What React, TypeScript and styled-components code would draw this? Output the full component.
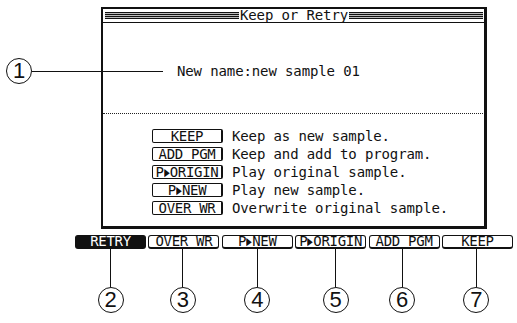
import styled, { createGlobalStyle } from 'styled-components';

const GlobalStyle = createGlobalStyle`
  html, body {
    margin: 0;
    padding: 0;
    background: #fff;
  }
  body {
    font-family: 'DejaVu Sans Mono', 'Liberation Mono', monospace;
    color: #111;
  }
`;

// narrow play triangle used in the P▶NEW / P▶ORIGIN labels
const Arrow = styled.span`
  display: inline-block;
  font-family: 'DejaVu Sans', sans-serif;
  font-size: 13px;
  letter-spacing: 0;
  transform: scale(0.55, 0.85);
  margin: 0 -2px;
`;

const playLabel = (rest: string) => (
  <>
    P<Arrow>{'\u25B6'}</Arrow>
    {rest}
  </>
);

const options = [
  { id: 'keep', key: <>KEEP</>, text: 'Keep as new sample.' },
  { id: 'add', key: <>ADD PGM</>, text: 'Keep and add to program.' },
  { id: 'orig', key: playLabel('ORIGIN'), text: 'Play original sample.' },
  { id: 'new', key: playLabel('NEW'), text: 'Play new sample.' },
  { id: 'over', key: <>OVER WR</>, text: 'Overwrite original sample.' },
];

const functionKeys = [
  { label: <>RETRY</>, num: '2', shift: 0, active: true },
  { label: <>OVER WR</>, num: '3', shift: -1 },
  { label: playLabel('NEW'), num: '4', shift: 0 },
  { label: playLabel('ORIGIN'), num: '5', shift: 5 },
  { label: <>ADD PGM</>, num: '6', shift: -2 },
  { label: <>KEEP</>, num: '7', shift: -1 },
];

const App = () => {
  return (
    <Page>
      <GlobalStyle />
      <Screen>
        <TitleBar>
          <Stripes />
          <Title>Keep or Retry</Title>
          <Stripes />
        </TitleBar>
        <NameArea>New name:new sample 01</NameArea>
        <DottedRule />
        <OptionList>
          {options.map((o) => (
            <OptionRow key={o.id}>
              <KeyBox>{o.key}</KeyBox>
              <OptionText>{o.text}</OptionText>
            </OptionRow>
          ))}
        </OptionList>
      </Screen>

      <FunctionBar>
        {functionKeys.map((f) => (
          <FnColumn key={f.num}>
            <FnButton $active={f.active}>{f.label}</FnButton>
            <Leader $shift={f.shift} />
            <Circle $shift={f.shift}>{f.num}</Circle>
          </FnColumn>
        ))}
      </FunctionBar>

      <NameCallout>
        <Circle>1</Circle>
        <CalloutLine />
      </NameCallout>
    </Page>
  );
};

const Page = styled.div`
  position: relative;
  width: 517px;
  height: 323px;
  overflow: hidden;
  background: #fff;
  display: flex;
  flex-direction: column;
`;

const Screen = styled.div`
  margin: 7px 0 0 101px;
  width: 386px;
  height: 222px;
  box-sizing: border-box;
  border: 2px solid #111;
  border-right-width: 3px;
  border-bottom-width: 3px;
  display: flex;
  flex-direction: column;
`;

const TitleBar = styled.div`
  height: 14px;
  box-sizing: border-box;
  border-bottom: 1px solid #111;
  display: flex;
  align-items: center;
  padding: 0 1px 0 2px;
`;

const Stripes = styled.div`
  flex: 1;
  height: 7px;
  background: repeating-linear-gradient(
    to bottom,
    #111 0,
    #111 1px,
    #bbb 1px,
    #bbb 2px
  );
`;

const Title = styled.div`
  font-size: 14px;
  letter-spacing: -0.12px;
  line-height: 13px;
  padding: 0 1px;
`;

const NameArea = styled.div`
  height: 90px;
  box-sizing: border-box;
  padding: 40px 0 0 74px;
  font-size: 14px;
  letter-spacing: -0.12px;
  line-height: 16px;
`;

const DottedRule = styled.div`
  border-top: 1px dotted #222;
  margin-right: 1px;
`;

const OptionList = styled.div`
  display: flex;
  flex-direction: column;
  gap: 4px;
  padding: 15px 0 0 49px;
`;

const OptionRow = styled.div`
  display: flex;
  align-items: center;
  gap: 9px;
  height: 14px;
`;

const KeyBox = styled.div`
  width: 71px;
  height: 14px;
  box-sizing: border-box;
  border: 1px solid #111;
  border-right-width: 2px;
  border-radius: 2px;
  text-align: center;
  font-size: 14px;
  letter-spacing: -0.3px;
  line-height: 12px;
  white-space: nowrap;
`;

const OptionText = styled.div`
  font-size: 14px;
  letter-spacing: -0.12px;
  line-height: 14px;
  white-space: nowrap;
`;

const FunctionBar = styled.div`
  display: flex;
  gap: 2.4px;
  margin: 6px 0 0 75px;
`;

const FnColumn = styled.div`
  width: 71px;
  display: flex;
  flex-direction: column;
  align-items: center;
`;

const FnButton = styled.div<{ $active?: boolean }>`
  width: 100%;
  height: 14px;
  box-sizing: border-box;
  border: 1px solid #111;
  border-bottom-width: 2px;
  border-radius: 3px;
  background: ${(p) => (p.$active ? '#111' : '#fff')};
  color: ${(p) => (p.$active ? '#fff' : '#111')};
  text-align: center;
  font-size: 14px;
  letter-spacing: -0.3px;
  line-height: 11px;
  white-space: nowrap;
`;

const Leader = styled.div<{ $shift?: number }>`
  width: 1px;
  height: 38px;
  background: #111;
  margin-left: ${(p) => (p.$shift ?? 0) * 2}px;
`;

const Circle = styled.div<{ $shift?: number }>`
  width: 26px;
  height: 26px;
  box-sizing: border-box;
  border: 1px solid #111;
  border-radius: 50%;
  display: flex;
  align-items: center;
  justify-content: center;
  flex-shrink: 0;
  margin-left: ${(p) => (p.$shift ?? 0) * 2}px;
  font-family: 'Liberation Sans', Arial, sans-serif;
  font-size: 22px;
  line-height: 1;
  color: #111;
`;

const NameCallout = styled.div`
  position: absolute;
  left: 6px;
  top: 58px;
  display: flex;
  align-items: center;
`;

const CalloutLine = styled.div`
  width: 131px;
  height: 1px;
  background: #111;
`;

export default App;
